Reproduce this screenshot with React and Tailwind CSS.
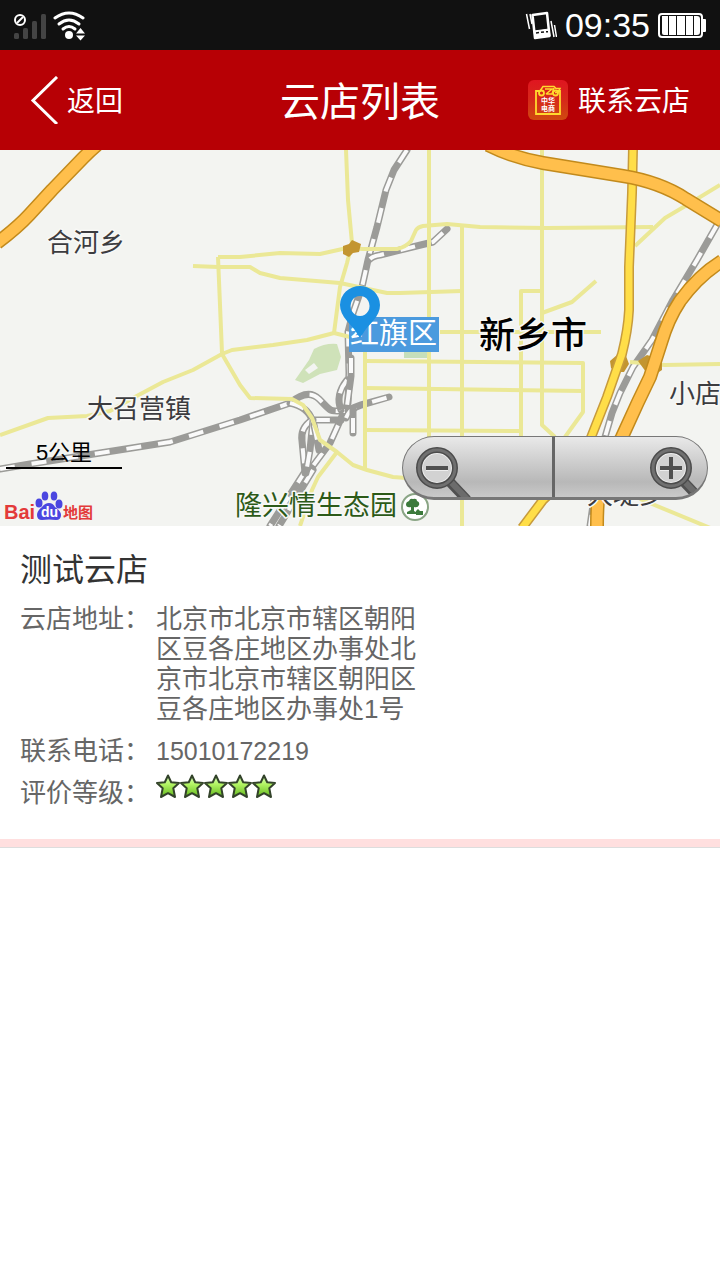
const minorRoads = [
  'M346 150 348 200 352 243 347 263 340 287 334 333',
  'M218 257 240 257 280 253 320 254 347 248 363 249 397 249Q406 247 411 241L416 230Q418 227 423 226L447 224 480 227 547 228 653 227',
  'M193 266 218 267 250 267 260 273 280 278 340 283 387 293 400 293 462 291',
  'M218 257 222 353',
  'M0 435 48 418 87 416 110 411 133 398 163 382 193 370 222 354 232 350 273 345 307 340 334 333 350 337',
  'M222 354 240 385 250 398 292 399 303 405 312 418 320 440 337 452 353 465 367 470 393 477 420 479',
  'M337 452 318 477 312 490 300 526',
  'M429 150V440',
  'M462 226V526',
  'M365 350V470',
  'M365 361 583 363V412L565 437',
  'M365 388 583 391',
  'M365 430 522 431',
  'M440 332 601 332',
  'M542 150V425L555 437',
  'M542 291H521V437',
  'M542 313 572 302 596 281',
  'M635 246 665 218 687 205 720 185',
  'M630 362 665 365 720 364',
  'M640 499 720 532',
];

const railways = [
  'M407 150 394 170 386 190 377 227 368 260 362 287 353 313 348 332 349 373 348 403 330 443 304 478',
  'M306 470 270 526',
  'M313 470 279 526',
  'M370 259Q373 256 380 255L433 242 447 229',
  'M0 469 30 464 100 453 170 442 240 420 290 403Q308 388 319 399C332 412 328 411 345 411',
  'M290 403Q308 407 312 420H341',
  'M312 420Q300 428 302 441L305 473',
  'M313 420 310 450 306 473',
  'M314 425 319 450',
  'M347 380Q335 395 341 410',
  'M351 358V376L347 406',
  'M346 418Q350 408 361 405L389 397',
  'M353 433V408',
  'M717 225 697 260 673 300 652 340 633 367 620 393 612 413 605 437 598 470 590 526',
];

const highways = [
  'M97 145Q90 151 83 158L52 190 29 215Q18 227 -3 243',
  'M488 145Q514 158 543 163L623 176Q660 182 686 199L722 221',
  'M722 261Q698 276 680 301 668 319 661 343L650 377 638 402 622 437 603 473Q597 488 597 528',
];

const expressway = 'M633 148 632 193 629 267 629 310Q628 330 622 354L607 397 590 440Q574 472 543 500L522 528';

const labels = [
  { text: '合河乡', x: 47, y: 252, className: 'fill-[#3c3c40] text-[26px]' },
  { text: '大召营镇', x: 87, y: 418, className: 'fill-[#3c3c40] text-[26px]' },
  { text: '小店', x: 669, y: 403, className: 'fill-[#3c3c40] text-[26px]' },
  { text: '大堤乡', x: 587, y: 504, className: 'fill-[#3c3c40] text-[26px]' },
  { text: '新乡市', x: 479, y: 348, className: 'fill-black text-[36px] font-medium' },
  { text: '隆兴情生态园', x: 235, y: 515, className: 'fill-[#2c5a18] text-[27px]' },
];

function SignalIcon() {
  return (
    <svg className="h-8 w-9" viewBox="0 0 36 32" fill="none">
      <g fill="#444">
        <rect x="3" y="24" width="5" height="6" rx="1.5" />
        <rect x="12" y="19" width="5" height="11" rx="1.5" />
        <rect x="21" y="12" width="5" height="18" rx="1.5" />
        <rect x="30" y="5" width="5" height="25" rx="1.5" />
      </g>
      <circle cx="9" cy="11" r="5" stroke="#fff" strokeWidth="2" />
      <path d="M6 14l6-6" stroke="#fff" strokeWidth="2" />
    </svg>
  );
}

function WifiIcon() {
  return (
    <svg className="h-8 w-8" viewBox="0 0 32 32" fill="none">
      <g stroke="#fff" strokeWidth="3" strokeLinecap="round">
        <path d="M2 9Q16-1 30 9" />
        <path d="M6 15Q16 7 26 15" />
        <path d="M10 20Q16 15 22 20" />
      </g>
      <circle cx="16" cy="26" r="4" fill="#fff" />
      <path d="M23 24.500l4.500-5.500 4.500 5.500zM23 26.500h9l-4.500 5z" fill="#fff" />
    </svg>
  );
}

function VibrateIcon() {
  return (
    <svg className="h-8 w-8" viewBox="0 0 32 32" fill="none" stroke="#fff">
      <path d="M7.500 6L22 4l2.500 23L10 29z" strokeWidth="2.500" strokeLinejoin="round" />
      <path d="M9 22l15-2 1 7-15 2z" fill="#fff" />
      <path d="M11 24l3-.4M16 23.300l3-.4M21 22.700h2" stroke="#111" strokeWidth="1.500" />
      <path d="M1.500 5l3 15M5 5l2 10M26 12l3 16M29.500 16l2 12" strokeWidth="1.500" />
    </svg>
  );
}

function BatteryIcon() {
  return (
    <svg className="h-8 w-12" viewBox="0 0 48 32" fill="none">
      <rect x="1" y="5" width="43" height="23" rx="3" stroke="#fff" strokeWidth="2" />
      <path d="M45 10h2q1 0 1 1v11q0 1-1 1h-2z" fill="#fff" />
      <path d="M4 7h6v19H6q-2 0-2-2zM11 7h7v19h-7zM19 7h8v19h-8zM28 7h7v19h-7zM36 7h3q3 0 3 3v13q0 3-3 3h-3z" fill="#fff" />
    </svg>
  );
}

function ShopLogo() {
  return (
    <svg className="h-10 w-10" viewBox="0 0 40 40" fill="none">
      <defs>
        <linearGradient id="shop" x1="0" y1="0" x2="0" y2="1">
          <stop offset="0" stopColor="#e01520" />
          <stop offset="0.500" stopColor="#d62a1a" />
          <stop offset="1" stopColor="#d04a10" />
        </linearGradient>
      </defs>
      <rect width="40" height="40" rx="6" fill="url(#shop)" />
      <g stroke="#ffd92e" strokeWidth="1.800">
        <path d="M11 11H8v23h24V11h-3" />
        <path d="M12 11l3-4.500h11l2 2h4l-2 4h-3M18 14h6l2-6M17 9h7l-6 5" strokeWidth="1.500" />
        <circle cx="13.500" cy="13" r="2.500" />
        <circle cx="27.500" cy="13" r="2.500" />
      </g>
      <g fill="#fff" className="text-[7px] font-bold">
        <text x="13" y="23">中华</text>
        <text x="13" y="31">电商</text>
      </g>
    </svg>
  );
}

function StatusBar() {
  return (
    <div className="flex h-[50px] items-center justify-between bg-[#111] pr-[14px] pl-[11px] text-white">
      <div className="flex items-center gap-[6px]">
        <SignalIcon />
        <WifiIcon />
      </div>
      <div className="flex items-center gap-2">
        <VibrateIcon />
        <span className="text-[34px] leading-[50px]">09:35</span>
        <BatteryIcon />
      </div>
    </div>
  );
}

function Header() {
  return (
    <header className="grid h-[100px] grid-cols-[1fr_auto_1fr] items-center bg-[#b70005] px-[30px] text-white">
      <button type="button" className="flex items-center gap-2 justify-self-start text-[28px] leading-10">
        <svg className="h-12 w-[29px]" viewBox="0 0 29 48" fill="none">
          <path d="M27 1L3 24.500 27 48" stroke="#fff" strokeWidth="3" />
        </svg>
        <span className="pt-1">返回</span>
      </button>
      <h1 className="pt-1 text-[40px] leading-[60px]">云店列表</h1>
      <a href="#contact" className="flex items-center gap-[10px] justify-self-end text-[28px] leading-10">
        <ShopLogo />
        <span className="pt-1">联系云店</span>
      </a>
    </header>
  );
}

function MapDrawing() {
  return (
    <svg className="h-full w-full" viewBox="0 150 720 376" preserveAspectRatio="xMidYMid slice" fill="none">
      <path d="M295 380L309 360 314 349Q325 343 337 344L341 357 337 370 320 374 303 383Z" fill="#cfe2b9" />
      <path d="M305 370l9-7 4 5-9 6z" fill="#f3f4f1" />
      <path d="M404 350h24v8h-24z" fill="#c5dfbb" />

      <g strokeLinejoin="round">
        {railways.map((d) => (
          <g key={d}>
            <path d={d} stroke="#9b9b98" strokeWidth="7" strokeLinecap="round" />
            <path d={d} stroke="#fafafa" strokeWidth="4" strokeDasharray="15 17" />
          </g>
        ))}
        {minorRoads.map((d) => (
          <path key={d} d={d} stroke="#ebe896" strokeWidth="4" />
        ))}
        <path d="M343 246l6-2 3-4 9 4-2 8-6 1-4 4-6-3z" fill="#c39530" />
        <path d="M610 361l7-6 9 1 3 8-5 8-8 0-5-4zM638 361l9-6 15 5 0 10-6 4-10-2z" fill="#c39530" />
        <path d={expressway} stroke="#c79b3c" strokeWidth="10" />
        <path d={expressway} stroke="#ffde48" strokeWidth="7" />
        {highways.map((d) => (
          <g key={d}>
            <path d={d} stroke="#c28a1c" strokeWidth="14" />
            <path d={d} stroke="#ffbf4c" strokeWidth="11" />
          </g>
        ))}
      </g>

      <g stroke="#f8f8f6" strokeWidth="3" strokeLinejoin="round" style={{ paintOrder: 'stroke' }}>
        {labels.map((label) => (
          <text key={label.text} x={label.x} y={label.y} className={label.className}>
            {label.text}
          </text>
        ))}
      </g>

      <circle cx="415" cy="507" r="13" fill="#fff" stroke="#8aa585" strokeWidth="2" />
      <path
        d="M411 510v-3q-5 1-5-3 0-2 3-3 1-3 4-2 4-1 4 2 3 1 2 4-1 3-5 2v4l2 1v2h-9v-2zM416 511l2-2 2 2h3v4h-7z"
        fill="#3c7a3c"
      />

      <rect x="349" y="317" width="90" height="35" fill="#4b9ade" />
      <text x="350" y="344" className="fill-white text-[29px]">
        红旗区
      </text>
      <path
        d="M360 338Q355 329 347 321 340 313 340 305A20 19 0 0 1 380 305Q380 313 373 321 365 329 360 338ZM360 296a9.500 10 0 1 0 .1 0z"
        fill="#1a90e2"
        fillRule="evenodd"
      />
    </svg>
  );
}

function BaiduLogo() {
  return (
    <svg className="h-8 w-[92px]" viewBox="0 0 92 32" fill="#4b46e0">
      <text x="0" y="29" className="fill-[#e33a3a] text-[20px] font-bold">
        Bai
      </text>
      <ellipse cx="35" cy="13" rx="3.500" ry="4.500" />
      <ellipse cx="41" cy="6" rx="3.300" ry="4.600" />
      <ellipse cx="50" cy="6" rx="3.300" ry="4.600" />
      <ellipse cx="55" cy="14" rx="3.500" ry="4.500" />
      <path d="M45 13q4 0 6 4 6 4 6 8 0 5-5 5-7-1-14 0-5 0-5-5 0-4 5-8 3-4 7-4z" />
      <text x="37" y="27" className="fill-white text-[14px] font-bold">
        du
      </text>
      <text x="59" y="28" className="fill-[#e33a3a] text-[15px] font-bold">
        地图
      </text>
    </svg>
  );
}

function MagnifierIcon({ plus }) {
  return (
    <svg className="h-[50px] w-[58px]" viewBox="0 0 58 50" fill="none">
      <path d="M34 34L52 53" stroke="#505050" strokeWidth="10" />
      <path d="M34 33L53 53" stroke="#6c6c6c" strokeWidth="6" />
      <circle cx="22" cy="21" r="15" fill="#d2d2d2" stroke="#eee" strokeWidth="2" />
      <circle cx="22" cy="21" r="18" stroke="#4c4c4c" strokeWidth="6" />
      <circle cx="22" cy="21" r="18" stroke="#707070" strokeWidth="3" />
      <path d="M11 22h22" stroke="#eee" strokeWidth="4" />
      <path d="M11 21h22" stroke="#505050" strokeWidth="4" />
      {plus && <path d="M22 10v22" stroke="#505050" strokeWidth="4" />}
    </svg>
  );
}

function ZoomControls() {
  return (
    <div className="absolute right-3 bottom-[26px] flex h-16 w-[306px] overflow-hidden rounded-full border-x border-t border-b-[3px] border-[#777] bg-linear-to-b from-[#e9e9e9] via-[#b8b8b8] via-75% to-[#c9c9c9]">
      <button
        type="button"
        aria-label="缩小"
        className="flex h-full w-1/2 items-end overflow-hidden border-r-[3px] border-[#666] pl-3"
      >
        <MagnifierIcon />
      </button>
      <button type="button" aria-label="放大" className="flex h-full w-1/2 items-end justify-end overflow-hidden">
        <MagnifierIcon plus />
      </button>
    </div>
  );
}

function StoreMap() {
  return (
    <section className="relative h-[376px] overflow-hidden bg-[#f3f4f1]">
      <MapDrawing />
      <div className="absolute bottom-[57px] left-[6px] w-[116px] border-b-2 border-black text-center text-[22px] leading-7 text-black">
        5公里
      </div>
      <div className="absolute bottom-1 left-1">
        <BaiduLogo />
      </div>
      <ZoomControls />
    </section>
  );
}

function Star() {
  return (
    <svg className="h-6 w-6" viewBox="0 0 24 24">
      <defs>
        <linearGradient id="star" x1="0" y1="0" x2="0" y2="1">
          <stop offset="0" stopColor="#d9ffc0" />
          <stop offset="0.400" stopColor="#b4f565" />
          <stop offset="1" stopColor="#62b81c" />
        </linearGradient>
      </defs>
      <path
        d="M12 1.500l3.200 6.800 7.800.7-5.700 5.300 1.700 8.700-7-3.800-7 3.800 1.700-8.700L1 9l7.800-.7z"
        fill="url(#star)"
        stroke="#33432a"
        strokeWidth="2"
        strokeLinejoin="round"
      />
    </svg>
  );
}

function StoreCard({ store }) {
  return (
    <article className="border-b border-[#ddd]">
      <div className="px-5 pt-6 pb-[31px]">
        <h2 className="text-[32px] leading-10 text-[#333]">{store.name}</h2>
        <dl className="mt-[14px] grid grid-cols-[136px_264px] gap-y-3 text-[26px] leading-[30px] text-[#666]">
          <dt>云店地址：</dt>
          <dd>{store.address}</dd>
          <dt>联系电话：</dt>
          <dd className="text-[25px]">{store.phone}</dd>
          <dt>评价等级：</dt>
          <dd className="-mt-1 flex">
            {Array.from({ length: store.rating }, (_, i) => (
              <Star key={i} />
            ))}
          </dd>
        </dl>
      </div>
      <div className="h-2 bg-[#ffdfdf]" />
    </article>
  );
}

const store = {
  name: '测试云店',
  address: '北京市北京市辖区朝阳区豆各庄地区办事处北京市北京市辖区朝阳区豆各庄地区办事处1号',
  phone: '15010172219',
  rating: 5,
};

export default function App() {
  return (
    <div lang="zh-CN" className="min-h-screen bg-white font-['Liberation_Sans','Noto_Sans_CJK_SC',sans-serif]">
      <StatusBar />
      <Header />
      <main>
        <StoreMap />
        <StoreCard store={store} />
      </main>
    </div>
  );
}
